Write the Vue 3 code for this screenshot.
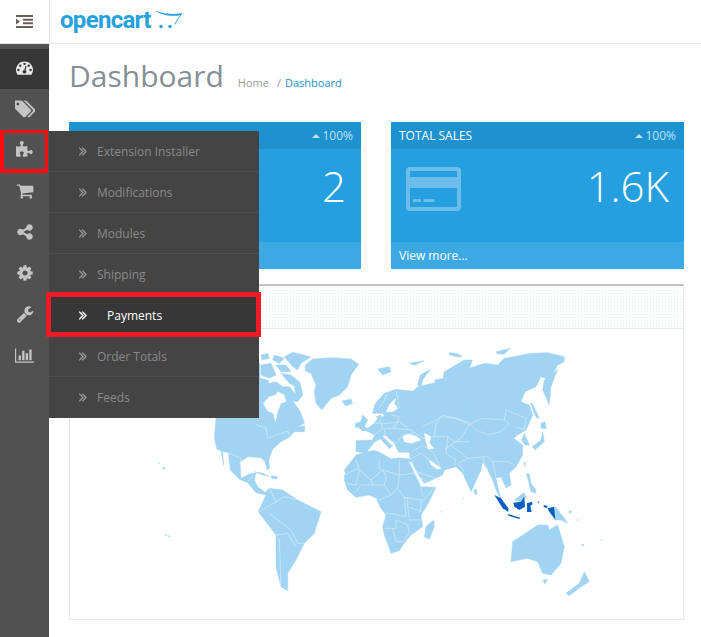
<script setup>
const fa = {
  dashboard: 'M384 1152q0-53-37.500-90.500t-90.500-37.500-90.500 37.500-37.500 90.500 37.500 90.500 90.500 37.500 90.500-37.500 37.500-90.500zm192-448q0-53-37.500-90.500t-90.500-37.500-90.500 37.500-37.500 90.500 37.500 90.500 90.500 37.500 90.500-37.500 37.500-90.500zm428 481l101-382q6-26-7.500-48.500t-38.500-29.500-48 6.500-30 39.500l-101 382q-60 5-107 43.500t-63 98.500q-20 77 20 146t117 89 146-20 89-117q16-60-6-117t-72-91zm660-33q0-53-37.500-90.500t-90.500-37.500-90.500 37.500-37.500 90.500 37.500 90.500 90.500 37.500 90.500-37.500 37.500-90.500zm-640-640q0-53-37.500-90.500t-90.500-37.500-90.500 37.500-37.500 90.500 37.500 90.500 90.500 37.500 90.500-37.500 37.500-90.500zm448 192q0-53-37.500-90.500t-90.500-37.500-90.500 37.500-37.500 90.500 37.500 90.500 90.500 37.500 90.500-37.500 37.500-90.500zm320 448q0 261-141 483-19 29-54 29h-1402q-35 0-54-29-141-221-141-483 0-182 71-348t191-286 286-191 348-71 348 71 286 191 191 286 71 348z',
  tags: 'M384 448q0-53-37.500-90.500t-90.500-37.500-90.500 37.500-37.500 90.500 37.500 90.500 90.500 37.500 90.500-37.500 37.500-90.500zm1067 576q0 53-37 90l-491 492q-39 37-91 37-53 0-90-37l-715-716q-38-37-64.500-101t-26.500-117v-416q0-52 38-90t90-38h416q53 0 117 26.500t102 64.500l715 714q37 39 37 91zm384 0q0 53-37 90l-491 492q-39 37-91 37-36 0-59-14t-53-45l470-470q37-37 37-90 0-52-37-91l-715-714q-38-38-102-64.500t-117-26.500h224q53 0 117 26.500t102 64.500l715 714q37 39 37 91z',
  puzzle: 'M1664 1098q0 81-44.500 135t-123.500 54q-41 0-77.500-17.500t-59-38-56.500-38-71-17.500q-110 0-110 124 0 39 16 115t15 115v5q-22 0-33 1-34 3-97.500 11.500t-115.500 13.500-98 5q-61 0-103-26.500t-42-83.500q0-37 17.500-71t38-56.500 38-59 17.500-77.500q0-79-54-123.500t-135-44.500q-84 0-143 45.500t-59 127.500q0 43 15 83t33.500 64.500 33.500 53 15 50.500q0 45-46 89-37 35-117 35-95 0-245-24-9-2-27.500-4t-27.500-4l-13-2q-1 0-3-1-2 0-2-1v-1024q2 1 17.500 3.500t34 5 21.500 3.500q150 24 245 24 80 0 117-35 46-44 46-89 0-22-15-50.500t-33.500-53-33.500-64.500-15-83q0-82 59-127.500t144-45.500q80 0 134 44.500t54 123.500q0 41-17.500 77.500t-38 59-38 56.500-17.500 71q0 57 42 83.500t103 26.500q64 0 180-15t163-17v2q-1 2-3.500 17.500t-5 34-3.500 21.500q-24 150-24 245 0 80 35 117 44 46 89 46 22 0 50.500-15t53-33.500 64.500-33.500 83-15q82 0 127.500 59t45.500 143z',
  cart: 'M704 1536q0 52-38 90t-90 38-90-38-38-90 38-90 90-38 90 38 38 90zm896 0q0 52-38 90t-90 38-90-38-38-90 38-90 90-38 90 38 38 90zm128-1088v512q0 24-16.500 42.500t-40.500 21.500l-1044 122q13 60 13 70 0 16-24 64h920q26 0 45 19t19 45-19 45-45 19h-1024q-26 0-45-19t-19-45q0-11 8-31.500t16-36 21.500-40 15.500-29.500l-177-823h-204q-26 0-45-19t-19-45 19-45 45-19h256q16 0 28.500 6.500t19.500 15.500 13 24.500 8 26 5.500 29.500 4.500 26h1201q26 0 45 19t19 45z',
  share: 'M1344 1024q133 0 226.500 93.500t93.500 226.500-93.500 226.500-226.500 93.500-226.500-93.500-93.500-226.500q0-12 2-34l-360-180q-92 86-218 86-133 0-226.500-93.500t-93.500-226.500 93.500-226.500 226.500-93.500q126 0 218 86l360-180q-2-22-2-34 0-133 93.500-226.500t226.500-93.500 226.500 93.500 93.500 226.500-93.500 226.500-226.500 93.500q-126 0-218-86l-360 180q2 22 2 34t-2 34l360 180q92-86 218-86z',
  cog: 'M1152 896q0-106-75-181t-181-75-181 75-75 181 75 181 181 75 181-75 75-181zm512-109v222q0 12-8 23t-20 13l-185 28q-19 54-39 91 35 50 107 138 10 12 10 25t-9 23q-27 37-99 108t-94 71q-12 0-26-9l-138-108q-44 23-91 38-16 136-29 186-7 28-36 28h-222q-14 0-24.500-8.500t-11.500-21.500l-28-184q-49-16-90-37l-141 107q-10 9-25 9-14 0-25-11-126-114-165-168-7-10-7-23 0-12 8-23 15-21 51-66.500t54-70.500q-27-50-41-99l-183-27q-13-2-21-12.500t-8-23.500v-222q0-12 8-23t19-13l186-28q14-46 39-92-40-57-107-138-10-12-10-24 0-10 9-23 26-36 98.500-107.500t94.500-71.500q13 0 26 10l138 107q44-23 91-38 16-136 29-186 7-28 36-28h222q14 0 24.500 8.500t11.500 21.500l28 184q49 16 90 37l142-107q9-9 24-9 13 0 25 10 129 119 165 170 7 8 7 22 0 12-8 23-15 21-51 66.500t-54 70.500q26 50 41 98l183 28q13 2 21 12.500t8 23.500z',
  wrench: 'M448 1472q0-26-19-45t-45-19-45 19-19 45 19 45 45 19 45-19 19-45zm644-420l-682 682q-37 37-90 37-52 0-91-37l-106-108q-38-36-38-90 0-53 38-91l681-681q39 98 114.500 173.500t173.500 114.500zm634-435q0 39-23 106-47 134-164.500 217.500t-258.500 83.500q-185 0-316.500-131.500t-131.500-316.500 131.500-316.500 316.500-131.500q58 0 121.500 16.500t107.500 46.500q16 11 16 28t-16 28l-293 169v224l193 107q5-3 79-48.500t135.500-81 70.500-35.500q15 0 23.500 10t8.500 25z',
  chart: 'M640 896v512h-256v-512h256zm384-512v1024h-256v-1024h256zm1024 1152v128h-2048v-1536h128v1408h1920zm-640-896v768h-256v-768h256zm384-384v1152h-256v-1152h256z'
}
const chevrons = 'M979 960q0 13-10 23l-466 466q-10 10-23 10t-23-10l-50-50q-10-10-10-23t10-23l393-393-393-393q-10-10-10-23t10-23l50-50q10-10 23-10t23 10l466 466q10 10 10 23zm384 0q0 13-10 23l-466 466q-10 10-23 10t-23-10l-50-50q-10-10-10-23t10-23l393-393-393-393q-10-10-10-23t10-23l50-50q10-10 23-10t23 10l466 466q10 10 10 23z'

const nav = [
  { id: 'dashboard', d: fa.dashboard, size: 17, active: true },
  { id: 'tags', d: fa.tags, size: 20 },
  { id: 'puzzle', d: fa.puzzle, size: 18, flagged: true, open: true },
  { id: 'cart', d: fa.cart, size: 18 },
  { id: 'share', d: fa.share, size: 18 },
  { id: 'cog', d: fa.cog, size: 18 },
  { id: 'wrench', d: fa.wrench, size: 18 },
  { id: 'chart', d: fa.chart, size: 19, wide: true }
]
const submenu = ['Extension Installer', 'Modifications', 'Modules', 'Shipping', 'Payments', 'Order Totals', 'Feeds']

const cards = [
  { id: 'orders', title: 'TOTAL ORDERS', value: '2' },
  { id: 'sales', title: 'TOTAL SALES', value: '1.6K' }
]

// Map outlines traced in overlapping frames: origin in px, 3 units = 1 px.
const frames = [
  {
    x: 140, y: 330,
    land: [
      '240,100 357,100 357,150 440,200 490,280 470,290 492,287 490,305 460,305 445,322 420,335 395,358 383,390 386,415 378,420 372,395 360,383 320,380 297,397 300,445 325,432 345,428 340,450 350,470 372,487 385,475 425,480 470,510 540,545 520,610 490,640 465,690 440,730 440,782 420,770 405,710 405,615 352,545 375,495 345,488 320,458 295,448 268,420 262,368 245,365 248,405 240,362 228,358 220,325 222,300',
      '340,425 365,430 385,440 360,433',
      '390,437 410,440 408,447 392,445'
    ],
    borders: [
      '245,365 270,372 300,385 297,400',
      '320,455 335,440',
      '385,475 405,515 355,545',
      '405,515 430,500 470,510',
      '385,550 405,565 450,600 470,640 490,640',
      '405,615 440,610 465,650',
      '415,625 420,770'
    ],
    dots: [[68, 415, 3], [55, 400, 1.5], [75, 615, 2], [84, 619, 2]]
  },
  {
    x: 255, y: 345,
    land: [
      '12,100 35,105 40,115 60,110 80,125 100,125 120,150 115,130 130,110 135,130 140,150 125,170 110,168 130,195 145,232 125,238 100,250 60,240 0,240',
      '85,35 110,22 165,35 135,55 125,75 110,65',
      '75,85 105,90 130,110 140,145 125,130 100,115',
      '15,60 45,55 60,90 40,100 15,90',
      '55,30 85,40 70,55 50,45',
      '15,30 35,25 40,40 18,45',
      '60,60 90,60 105,80 75,80',
      '148,60 170,42 230,38 285,42 308,58 285,90 275,125 250,150 225,160 197,195 180,175 175,140 180,120 165,85 148,78',
      '258,168 285,162 290,175 270,183',
      '365,72 400,65 405,80 380,90',
      '320,210 335,225 325,245 340,255 320,258 300,240 315,228',
      '298,235 310,232 313,245 298,248'
    ],
    holes: ['22,175 40,155 60,150 65,140 85,150 90,170 75,175 65,200 58,230 52,205 35,198'],
    borders: ['0,238 30,250 35,280 75,265 95,258 100,270']
  },
  {
    x: 400, y: 330,
    land: [
      '0,190 30,190 50,170 95,160 125,150 130,125 190,90 215,90 205,115 250,100 290,105 310,85 390,70 440,68 490,80 490,95 470,105 445,150 420,140 405,170 372,185 360,215 385,225 395,255 375,300 350,315 338,325 365,345 365,375 345,410 325,430 330,465 315,475 300,440 285,445 295,490 300,510 285,480 275,450 260,420 245,395 240,420 210,485 185,430 165,410 130,420 125,435 70,460 25,395 0,370 -60,350 -30,250',
      '430,150 445,140 470,118 450,170 445,225 425,180',
      '388,220 395,222 415,265 405,262',
      '420,280 432,275 436,295 420,295',
      '425,305 430,335 402,360 394,350 420,330',
      '370,310 385,345 372,345 362,330',
      '368,398 373,396 372,410',
      '376,430 385,432 390,460 405,480 404,490 390,485',
      '218,480 226,478 228,492 222,493',
      '98,570 100,590 85,628 70,620 75,590',
      '335,635 380,605 410,585 440,585 445,600 460,590 470,585 490,650 480,700 450,735 425,730 410,695 380,685 330,695',
      '425,750 440,748 432,762',
      '550,725 565,755 540,770 505,797 495,790 535,760',
      '340,510 368,488 376,500 360,515',
      '463,530 490,565 500,580 480,570 463,570',
      '145,68 165,70 183,78 175,82 145,75',
      '285,65 328,55 310,72 290,72',
      '25,100 70,92 40,106',
      '50,165 58,135 88,118 65,150 60,170',
      '100,150 130,145 118,190 110,165',
      '505,540 512,545 505,552'
    ],
    borders: [
      '65,290 105,270 125,255 175,270 205,285 240,265 310,270 315,240 375,265 370,300 345,290',
      '210,285 225,300 260,315 300,305 325,280 310,270',
      '205,285 180,325 150,345 200,385 260,380 275,395 320,395 340,405',
      '150,345 130,360',
      '200,385 170,400 190,425',
      '275,395 285,445 320,470',
      '245,385 260,420'
    ],
    dots: [[530, 570, 2], [545, 645, 3], [601, 630, 1.5], [188, 505, 1.5], [122, 545, 1.5]]
  },
  {
    x: 340, y: 380,
    land: [
      '45,182 95,180 100,165 72,150 100,130 110,115 140,105 170,90 200,60 205,45 235,30 270,25 285,5 300,35 390,40 390,250 300,262 265,240 205,235 45,215',
      '95,100 102,72 130,40 165,28 205,45 195,60 215,90 175,90 150,100 135,115 125,100 112,100',
      '165,28 230,35 220,50 195,55',
      '105,110 120,105 120,118',
      '10,270 45,225 70,218 100,210 115,215 150,235 175,232 205,238 215,290 100,300 20,300'
    ],
    holes: [
      '80,214 100,188 118,178 146,208 160,192 172,218 205,218 206,236 175,232 150,235 115,215 100,210',
      '125,168 135,168 160,192 152,195',
      '135,95 148,70 165,55 160,70 170,85 155,95',
      '185,170 200,162 225,168 240,180 210,190 190,185',
      '250,160 270,170 265,190 280,205 262,208 255,185',
      '265,240 280,250 300,265 290,268 270,255',
      '205,245 212,248 250,320 240,318'
    ],
    borders: [
      '100,165 125,145 160,145 175,110 150,105',
      '125,145 115,120',
      '130,150 135,175 165,190 185,165 220,160',
      '160,145 210,150 245,175',
      '100,130 140,130 175,125 200,145',
      '285,130 300,110 350,115 390,130',
      '245,175 280,170 285,130',
      '280,170 320,170 340,185 385,185',
      '245,195 275,215 300,265',
      '320,170 315,220 345,240 340,255',
      '215,215 245,195',
      '205,240 240,220 265,240',
      '225,275 300,300',
      '115,85 130,60 140,40',
      '165,28 175,85'
    ]
  },
  {
    x: 340, y: 460,
    land: ['10,45 45,0 205,0 250,80 285,82 262,130 240,165 245,200 210,225 190,250 175,272 150,280 145,265 130,225 125,200 135,165 120,145 105,115 85,105 45,112 20,90 10,60'],
    borders: [
      '45,0 55,30 90,60 125,30 175,45 215,40',
      '115,0 115,25 125,30',
      '175,0 175,45',
      '215,0 218,40 235,60',
      '10,45 50,25',
      '55,30 45,75 10,70',
      '90,60 95,75 60,75 45,95',
      '125,30 135,50 130,75 95,75',
      '130,75 150,105 115,120 105,115',
      '175,45 170,85 190,112 240,120',
      '150,105 170,85',
      '240,120 240,155 200,140 200,112',
      '190,112 195,170 135,158',
      '200,140 205,180 245,180',
      '130,205 165,205 165,180 200,195 205,220 185,245 165,245 155,205',
      '190,250 200,235',
      '218,40 280,80 250,120 240,120',
      '235,60 245,110'
    ]
  }
]
const dark = [
  '280,495 300,505 322,535 322,546 305,535',
  '320,552 358,563 355,567 322,557',
  '337,518 360,515 370,500 372,530 355,540 340,530',
  '378,520 392,515 395,522 388,528 392,546 378,546',
  '440,535 460,530 463,570 445,545',
  '428,525 440,528 438,534 428,532',
  '410,514 416,516 412,520'
]
const frameAt = (f) => `translate(${f.x} ${f.y}) scale(.33333)`
</script>

<template>
  <div class="page">
    <header class="topbar">
      <div class="toggle">
        <svg class="toggle-icon" viewBox="0 0 17 13" aria-hidden="true">
          <path d="M0 0h17v2H0zM7 3.700h10v2H7zM7 7.300h10v2H7zM0 11h17v2H0zM0 3.500l4 3-4 3z" />
        </svg>
      </div>
      <div class="logo">
        <span class="logo-word">opencart</span>
        <svg class="logo-cart" viewBox="0 0 30 22" aria-hidden="true">
          <path d="M.5 1C5 3.500 16 6.500 28.500 4L21 15.500l-.8-.3L26 6.200C17 8 6 6 .5 1z" />
          <circle cx="7" cy="17.500" r="1.700" />
          <circle cx="16" cy="17.500" r="1.700" />
        </svg>
      </div>
    </header>

    <div class="shell">
      <nav class="rail">
        <div v-for="item in nav" :key="item.id" class="rail-item" :class="{ active: item.active, flagged: item.flagged }">
          <svg class="rail-icon" :viewBox="item.wide ? '0 0 2048 1792' : '0 0 1792 1792'" :style="{ width: item.size + 'px', height: item.size + 'px' }" aria-hidden="true">
            <path :d="item.d" />
          </svg>
          <ul v-if="item.open" class="submenu">
            <li v-for="label in submenu" :key="label" class="sub-item" :class="{ current: label === 'Payments' }">
              <svg class="chev" viewBox="400 440 1000 1040" aria-hidden="true"><path :d="chevrons" /></svg>
              <span>{{ label }}</span>
            </li>
          </ul>
        </div>
      </nav>

      <main class="content">
        <div class="title-row">
          <h1>Dashboard</h1>
          <div class="crumbs">
            <span class="home">Home</span>
            <span class="sep">/</span>
            <span class="here">Dashboard</span>
          </div>
        </div>

        <section class="cards">
          <article v-for="card in cards" :key="card.id" class="tile">
            <div class="tile-head">
              <span>{{ card.title }}</span>
              <span class="delta"><i class="caret"></i>100%</span>
            </div>
            <div class="tile-body">
              <svg class="tile-icon" viewBox="0 0 55 44" aria-hidden="true">
                <path fill-rule="evenodd" d="M4 0h47a4 4 0 0 1 4 4v36a4 4 0 0 1-4 4H4a4 4 0 0 1-4-4V4a4 4 0 0 1 4-4zM4 4v6h47V4zM4 21v19h47V21zM7 32h8v3H7zM17.500 32h11v3h-11z" />
              </svg>
              <span class="tile-value">{{ card.value }}</span>
            </div>
            <div class="tile-foot">View more...</div>
          </article>
        </section>

        <section class="panel">
          <div class="panel-head"></div>
          <div class="panel-body">
            <svg class="map" viewBox="69 329 613 290" aria-hidden="true">
              <g v-for="f in frames" :key="'l' + f.x + f.y" :transform="frameAt(f)">
                <polygon v-for="(p, i) in f.land" :key="i" class="land" :points="p" />
                <circle v-for="(c, i) in f.dots || []" :key="'c' + i" class="land" :cx="c[0]" :cy="c[1]" :r="c[2]" />
              </g>
              <g v-for="f in frames" :key="'h' + f.x + f.y" :transform="frameAt(f)">
                <polygon v-for="(p, i) in f.holes || []" :key="i" class="hole" :points="p" />
              </g>
              <g v-for="f in frames" :key="'b' + f.x + f.y" :transform="frameAt(f)">
                <polyline v-for="(p, i) in f.borders" :key="i" class="border" :points="p" />
              </g>
              <g :transform="frameAt(frames[2])">
                <polygon v-for="(p, i) in dark" :key="i" class="dark" :points="p" />
              </g>
            </svg>
          </div>
        </section>
      </main>
    </div>
  </div>
</template>

<style>
html, body { margin: 0; background: #fff; }
</style>

<style scoped>
.page {
  width: 701px;
  height: 637px;
  overflow: hidden;
  position: relative;
  font-family: "Open Sans", "Liberation Sans", sans-serif;
  font-size: 12px;
  color: #666;
  background: #fff;
}
.topbar {
  height: 43px;
  display: flex;
  border-bottom: 1px solid #e6e6e6;
}
.toggle {
  width: 50px;
  flex: none;
  box-sizing: border-box;
  border-right: 1px solid #e6e6e6;
  display: flex;
  align-items: center;
  justify-content: center;
}
.toggle-icon { width: 17px; height: 13px; fill: #6a6059; }
.logo {
  display: flex;
  align-items: flex-start;
  padding-left: 10px;
}
.logo-word {
  font-family: Roboto, "Open Sans", sans-serif;
  font-weight: 700;
  font-size: 24px;
  line-height: 24px;
  margin-top: 8px;
  letter-spacing: -.7px;
  color: #27a1dd;
}
.logo-cart { width: 30px; height: 22px; margin: 9px 0 0 3px; fill: #27a1dd; }

.shell {
  display: flex;
  height: 593px;
}
.rail {
  width: 49px;
  flex: none;
  box-sizing: border-box;
  padding-top: 5px;
  background: #515151;
}
.rail-item {
  height: 41px;
  position: relative;
  display: flex;
  align-items: center;
  justify-content: center;
  box-sizing: border-box;
  padding-bottom: 3px;
}
.rail-item.active { background: #373737; height: 40px; margin-bottom: 1px; }
.rail-item.active .rail-icon { fill: #e8e8e8; }
.rail-icon { fill: #c4c4c4; }
.rail-item.flagged::after {
  content: "";
  position: absolute;
  left: 0;
  right: 1px;
  top: -1px;
  bottom: -1px;
  border: 4px solid #fb0a0a;
  border-width: 3px 3px 4px 4px;
}
.submenu {
  position: absolute;
  z-index: 3;
  left: 49px;
  top: 0;
  width: 210px;
  margin: 0;
  padding: 0;
  list-style: none;
  background: #444;
}
.sub-item {
  height: 41px;
  box-sizing: border-box;
  position: relative;
  display: flex;
  align-items: center;
  padding-left: 30px;
  color: #8a8a8a;
  border-bottom: 1px solid #4f4f4f;
}
.sub-item:last-child { border-bottom: 0; }
.chev {
  width: 8px;
  height: 9px;
  margin-right: 10px;
  fill: #999;
  stroke: #999;
  stroke-width: 50;
}
.sub-item.current {
  background: #373737;
  color: #fff;
}
.sub-item.current .chev { fill: #fff; stroke: #fff; margin-right: 20px; }
.sub-item.current::after {
  content: "";
  position: absolute;
  left: -3px;
  right: -2px;
  top: -3px;
  bottom: -2px;
  border: 5px solid #ed1c24;
}

.content {
  flex: 1;
  min-width: 0;
  box-sizing: border-box;
  padding: 0 17px 0 20px;
}
.title-row {
  height: 78px;
  display: flex;
  align-items: center;
  padding-bottom: 16px;
  box-sizing: border-box;
  gap: 14px;
}
h1 {
  margin: 0;
  font-size: 30px;
  font-weight: 400;
  color: #849096;
}
.crumbs {
  display: flex;
  gap: 4px;
  font-size: 11px;
  padding-top: 15px;
  color: #999;
}
.home { margin-right: 4px; }
.here { color: #1e91cf; }

.cards {
  display: grid;
  grid-template-columns: 292px 293px;
  column-gap: 30px;
}
.tile { background: #269fe0; color: #fff; height: 147px; display: flex; flex-direction: column; }
.tile-head {
  height: 27px;
  flex: none;
  background: #1e91cf;
  display: flex;
  align-items: center;
  justify-content: space-between;
  padding: 0 8px 0 8px;
}
.delta { display: flex; align-items: center; color: #bfe2f5; }
.caret {
  width: 0;
  height: 0;
  margin-right: 2px;
  border: 4px solid transparent;
  border-top: 0;
  border-bottom-color: #bfe2f5;
}
.tile-body {
  flex: 1;
  display: flex;
  align-items: center;
  justify-content: space-between;
  padding: 0 15px 13px 15px;
}
.tile-icon { width: 55px; height: 44px; fill: #6cbde9; }
.tile-value { font-size: 42px; font-weight: 300; line-height: 1; margin-bottom: 7px; }
.tile-foot {
  height: 27px;
  flex: none;
  background: #3da9e3;
  display: flex;
  align-items: center;
  padding-left: 8px;
}

.panel {
  margin-top: 15px;
  height: 336px;
  box-sizing: border-box;
  border: 1px solid #e6e6e6;
  border-top: 2px solid #c1c1c1;
  display: flex;
  flex-direction: column;
}
.panel-head {
  height: 43px;
  flex: none;
  box-sizing: border-box;
  border-bottom: 1px solid #e4e8ec;
  background-color: #fbfdfe;
  background-image: radial-gradient(#e3eef5 .6px, transparent .8px);
  background-size: 3px 3px;
}
.panel-body { flex: 1; min-height: 0; }
.map { display: block; width: 613px; height: 290px; }
.land { fill: #a0d4f2; stroke: #a0d4f2; stroke-width: 1.500; stroke-linejoin: round; }
.hole { fill: #fff; stroke: #fff; stroke-width: 1; stroke-linejoin: round; }
.dark { fill: #0a5fc0; }
.border { fill: none; stroke: #dff0fb; stroke-width: 1.800; stroke-linejoin: round; }
</style>
